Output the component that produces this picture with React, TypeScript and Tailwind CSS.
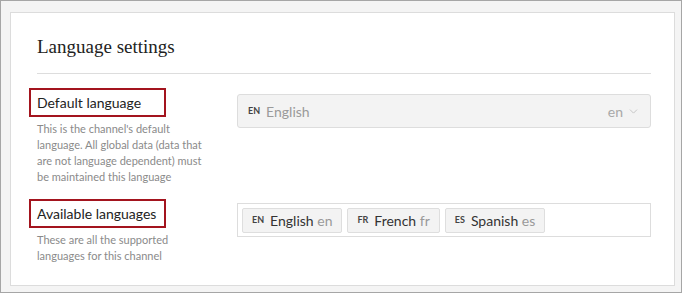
import { ChevronDown } from 'lucide-react';

const sans = { fontFamily: 'Lato, "Noto Sans", sans-serif' };

function Label({ text }: { text: string }) {
  return (
    <div className="-ml-[8px] w-[137px] h-[29px] border-2 border-[#a3141e] pl-[6px] flex items-center text-[14px] text-[#222] whitespace-nowrap">
      {text}
    </div>
  );
}

function Tag({ code, name, short }: { code: string; name: string; short: string }) {
  return (
    <div className="h-[25px] flex items-center gap-[6px] px-[9px] bg-[#f3f3f3] border border-[#dedede] rounded-[2px]">
      <span className="text-[9px] font-bold text-[#444]">{code}</span>
      <span className="text-[14px] text-[#333]">
        {name} <span className="text-[#999]">{short}</span>
      </span>
    </div>
  );
}

export default function App() {
  return (
    <div
      className="w-[682px] h-[293px] border border-[#a6a6a6] bg-[#f4f4f4] pt-[11px] pl-[9px] pr-[6px] pb-[6px]"
      style={sans}
    >
      <div className="h-full bg-white border border-[#dcdcdc] pl-[26px] pr-[23px]">
        <h2
          className="pt-[22px] h-[61px] text-[19px] text-[#222] leading-[24px] border-b border-[#dddddd]"
          style={{ fontFamily: '"Liberation Serif", serif' }}
        >
          Language settings
        </h2>

        <div className="flex gap-[24px] mt-[14px]">
          <div className="w-[176px] shrink-0">
            <Label text="Default language" />
            <p className="mt-[4px] text-[11px] leading-[16px] text-[#8a8a8a]">
              This is the channel's default language. All global data (data that are not language dependent) must be maintained this language
            </p>
          </div>
          <div className="flex-1 pt-[6px]">
            <div className="h-[34px] flex items-center bg-[#f3f3f3] border border-[#dddddd] rounded-[3px] pl-[10px] pr-[10px]">
              <span className="text-[9px] font-bold text-[#444]">EN</span>
              <span className="ml-[6px] text-[14px] text-[#9a9a9a]">English</span>
              <span className="ml-auto text-[14px] text-[#a8a8a8]">en</span>
              <ChevronDown size={13} strokeWidth={1.75} className="ml-[4px] text-[#c4c4c4]" />
            </div>
          </div>
        </div>

        <div className="flex gap-[24px] mt-[14px]">
          <div className="w-[176px] shrink-0">
            <Label text="Available languages" />
            <p className="mt-[4px] text-[11px] leading-[16px] text-[#8a8a8a]">
              These are all the supported languages for this channel
            </p>
          </div>
          <div className="flex-1 pt-[4px]">
            <div className="h-[34px] flex items-center gap-[5px] border border-[#dddddd] px-[4px]">
              <Tag code="EN" name="English" short="en" />
              <Tag code="FR" name="French" short="fr" />
              <Tag code="ES" name="Spanish" short="es" />
            </div>
          </div>
        </div>
      </div>
    </div>
  );
}
